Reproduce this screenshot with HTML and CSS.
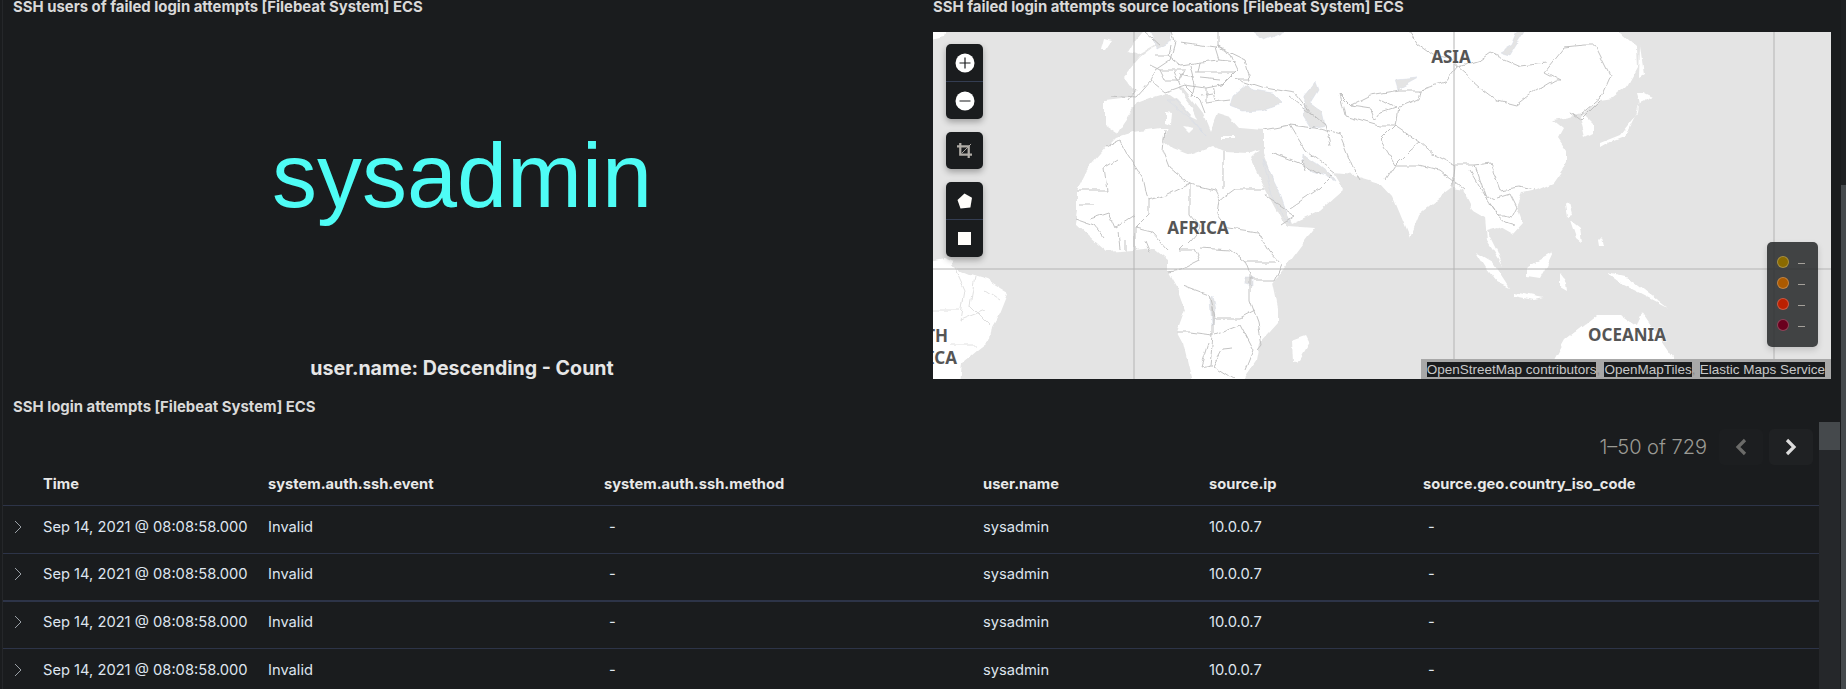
FILE: index.html
```html
<!DOCTYPE html>
<html lang="en">
<head>
<meta charset="utf-8">
<title>SSH dashboard</title>
<link rel="stylesheet" href="styles.css">
</head>
<body>
<div class="page">
  <div class="top">
    <section class="panel-left">
      <h2 class="title">SSH users of failed login attempts [Filebeat System] ECS</h2>
      <div class="tagcloud"><span class="tag">sysadmin</span></div>
      <div class="caption">user.name: Descending - Count</div>
    </section>
    <section class="panel-right">
      <h2 class="title">SSH failed login attempts source locations [Filebeat System] ECS</h2>
      <div class="map">
        <svg class="map-svg" viewBox="933 32 898 347" xmlns="http://www.w3.org/2000/svg">
          <defs>
            <filter id="rough" filterUnits="userSpaceOnUse" x="900" y="0" width="960" height="420" color-interpolation-filters="sRGB">
              <feTurbulence type="fractalNoise" baseFrequency="0.07" numOctaves="3" seed="4" result="n"/>
              <feDisplacementMap in="SourceGraphic" in2="n" scale="6" xChannelSelector="R" yChannelSelector="G"/>
              <feGaussianBlur stdDeviation="0.25"/>
            </filter>
          </defs>
          <rect class="sea" x="933" y="32" width="898" height="347"/>
          <g class="geo">
            <g class="land">
              <path d="M1165 26L1613 26 1637 47 1638 67 1627 87 1613 98 1600 100 1587 110 1580 117 1585 137 1593 133 1593 123 1583 113 1570 117 1553 120 1563 128 1558 137 1567 150 1567 163 1553 183 1537 190 1523 193 1517 207 1523 223 1512 235 1498 227 1487 230 1497 250 1503 265 1487 240 1485 217 1473 210 1463 190 1453 188 1420 213 1410 238 1393 197 1380 183 1353 175 1333 173 1343 190 1320 210 1292 223 1273 180 1263 153 1263 130 1240 128 1230 117 1217 113 1210 130 1203 113 1193 100 1183 88 1177 87 1193 108 1198 120 1192 117 1177 100 1167 93 1153 97 1137 103 1123 123 1117 133 1105 125 1105 100 1130 97 1133 90 1123 77 1140 57 1153 47 1165 42Z"/>
              <path d="M1123 135L1133 132 1160 128 1168 128 1163 140 1172 148 1190 155 1213 147 1223 152 1250 153 1258 150 1250 158 1267 193 1283 223 1288 226 1315 228 1308 237 1293 257 1282 272 1273 283 1278 307 1278 323 1260 343 1257 360 1248 373 1240 385 1193 385 1183 343 1177 332 1185 310 1177 288 1168 272 1168 260 1153 248 1133 250 1107 252 1090 237 1075 223 1077 210 1077 190 1087 170 1107 147 1117 137Z"/>
              <path d="M925 257L953 268 970 275 987 280 1008 293 1000 313 992 327 990 340 977 350 962 363 960 385 925 385Z"/>
              <path d="M1540 385L1565 340 1597 315 1620 315 1637 327 1642 312 1673 357 1673 385Z"/>
              <path d="M1147 26L1165 26 1155 45 1138 55 1128 52 1135 40Z"/>
              <path d="M1104 38L1112 40 1105 50 1101 50Z"/>
              <path d="M1306 335L1310 343 1300 360 1293 361 1292 340Z"/>
              <path d="M1476 252L1493 262 1510 288 1497 282 1486 268Z"/>
              <path d="M1513 292L1543 298 1534 300 1513 296Z"/>
              <path d="M1527 267L1553 252 1547 265 1540 278 1527 276Z"/>
              <path d="M1560 274L1566 282 1567 290 1560 286Z"/>
              <path d="M1607 273L1630 278 1667 307 1640 293 1620 283Z"/>
              <path d="M1637 112L1640 97 1638 112 1620 135 1600 143 1600 148 1612 141 1625 136Z"/>
              <path d="M1637 92L1643 92 1653 97 1640 103Z"/>
              <path d="M1640 45L1644 75 1639 78Z"/>
              <path d="M1565 205L1569 203 1572 215 1567 217Z M1570 220L1580 228 1582 243 1576 238Z"/>
              <path d="M1525 180L1528 178 1528 187 1525 187Z M1598 240L1602 236 1604 246 1599 246Z"/>
              <path d="M1166 112L1172 113 1171 124 1166 122Z M1183 126L1195 128 1190 133Z M1222 137L1235 137 1235 139 1222 139Z"/>
              <path d="M925 262L945 258 955 262 950 268 925 268Z"/>
              <path d="M925 26L948 26 945 36 925 40Z"/>
            </g>
            <g class="water">
              <path d="M1233 95L1247 83 1252 90 1273 93 1283 103 1262 110 1243 111 1230 106Z"/>
              <path d="M1305 95L1315 82 1318 90 1310 103 1322 112 1325 125 1312 128 1304 115Z"/>
              <path d="M1303 155L1315 163 1332 176 1335 181 1325 176 1312 172 1302 162Z"/>
              <path d="M1263 158L1280 193 1290 222 1283 218 1271 192Z"/>
              <path d="M1167 100L1175 100 1195 122 1205 135 1196 124 1180 110Z"/>
              <path d="M1245 26L1300 26 1265 40 1258 36Z"/>
              <path d="M1150 26L1170 26 1172 40 1157 48Z"/>
              <path d="M1520 26L1528 26 1510 55 1500 52 1512 45Z"/>
              <path d="M1395 80L1418 78 1400 88 1398 90Z"/>
              <path d="M1210 300L1213 296 1216 310 1212 325Z"/>
              <path d="M1246 278L1252 278 1252 286 1246 284Z"/>
            </g>
            <g class="border">
              <path d="M1117 160L1104 168 1107 190 1077 190M1107 147L1120 140 1128 155 1143 178 1148 200 1167 195 1190 184 1215 190 1220 200 1235 189 1265 189M1223 152L1223 189M1148 200L1148 215 1135 228 1135 250M1165 130L1163 150 1170 168 1190 184 1190 215 1200 228 1190 240 1180 250M1220 200L1218 215 1228 228 1258 232M1135 215L1115 228 1108 212 1090 218M1075 218L1095 225 1105 238M1118 232L1120 248M1135 228L1152 232 1168 250M1180 250L1195 250 1200 260 1180 270 1168 272M1200 248L1230 250 1245 262 1250 275 1250 300M1258 232L1270 252 1282 265 1275 280 1250 280M1245 262L1275 262M1183 285L1210 295 1213 307 1215 318 1240 318 1255 310M1213 307L1213 335 1190 332 1177 332M1213 335L1210 366 1200 368 1208 342M1215 335L1240 325 1253 350 1245 370M1250 300L1258 322 1262 345 1258 350M1233 347L1223 348 1213 366 1233 379M1280 225L1295 215 1265 195M1080 205L1095 205M1125 240L1125 250M1145 240L1150 252"/>
              <path d="M1110 95L1135 97 1150 80M1170 26L1175 42 1170 60 1155 70 1150 80 1165 92 1185 85 1205 88 1222 85 1237 70 1230 55 1218 47 1218 26M1180 42L1216 47 1220 60 1200 62 1180 65 1168 55 1170 45M1160 70L1185 70 1180 80 1165 80M1185 85L1200 100 1205 113M1205 88L1205 103 1230 100M1195 72L1220 72 1235 72M1218 47L1245 60 1250 78 1235 78 1265 88 1295 93 1310 112 1325 125 1330 145M1290 97L1313 115M1263 130L1290 125 1315 128 1340 135 1352 165 1360 180M1290 125L1305 150 1335 172M1272 152L1305 165 1320 175M1302 160L1305 170M1290 208L1320 188 1333 175M1175 72L1180 85M1190 65L1195 85M1150 65L1160 70M1200 78L1220 80M1145 32L1160 45M1128 100L1135 90M1155 55L1168 55M1165 80L1160 70M1180 75L1195 78M1195 85L1192 95M1200 95L1212 93M1212 85L1215 100M1220 60L1235 62M1200 62L1198 72"/>
              <path d="M1405 26L1418 45 1432 55 1450 58 1457 67 1445 82 1420 90 1418 100 1398 108 1395 125 1420 142 1435 155 1455 165 1475 165 1490 163 1500 190 1520 187 1535 190M1380 100L1395 108 1380 113 1375 120 1370 108 1350 105 1340 95 1345 115 1380 125 1395 125M1350 105L1370 95 1400 90 1420 90M1457 67L1480 87 1497 100 1517 105 1530 95 1555 80 1560 80 1545 72 1565 47 1583 45 1595 45 1610 75 1600 98 1580 115M1457 67L1480 60 1490 53 1520 66 1545 63M1395 125L1380 140 1395 165 1385 180M1420 142L1410 150 1395 165 1420 165 1440 170 1465 190M1455 165L1453 188M1475 165L1487 200 1497 215 1505 222 1515 225M1497 197L1510 193 1517 207 1512 217 1505 215 1497 215 1490 205M1470 170L1485 195 1495 200M1570 113L1580 120 1600 100"/>
              <path class="faint" d="M955 268L965 290 960 320 985 310M975 278L970 305 990 325M933 310L960 310M950 345L975 345M985 290L1000 300"/>
            </g>
          </g>
          <path d="M1134 32L1134 379M1454 32L1454 379M1774 32L1774 379M933 269L1831 269" class="grid"/>
          <g class="labels">
            <text x="1451" y="63" text-anchor="middle">ASIA</text>
            <text x="1198" y="234" text-anchor="middle">AFRICA</text>
            <text x="1627" y="341" text-anchor="middle">OCEANIA</text>
            <text x="948" y="342" text-anchor="end">SOUTH</text>
            <text x="957" y="364" text-anchor="end">AMERICA</text>
          </g>
        </svg>
        <div class="controls">
          <div class="ctl-group">
            <button class="ctl"><svg viewBox="0 0 20 20" width="20" height="20"><circle cx="10" cy="10" r="9.5" class="ic-fill"/><path d="M10 4.5V15.5M4.5 10H15.5" class="ic-stroke"/></svg></button>
            <button class="ctl"><svg viewBox="0 0 20 20" width="20" height="20"><circle cx="10" cy="10" r="9.5" class="ic-fill"/><path d="M4.5 10H15.5" class="ic-stroke"/></svg></button>
          </div>
          <div class="ctl-group">
            <button class="ctl"><svg viewBox="0 0 16 16" width="15" height="15"><path d="M3.5 0V12.5H16M0 3.5H12.5V16" class="ic-crop"/><path d="M5 11L15 1" class="ic-crop-thin"/></svg></button>
          </div>
          <div class="ctl-group">
            <button class="ctl"><svg viewBox="0 0 16 16" width="16" height="16"><path d="M7.5 0.5L15 4.8 13.4 14.6 3.5 15.4 0.5 7Z" class="ic-white"/></svg></button>
            <button class="ctl"><svg viewBox="0 0 14 14" width="14" height="14"><rect width="13" height="13" class="ic-white"/></svg></button>
          </div>
        </div>
        <div class="legend">
          <div class="legend-row"><span class="dot dot-a"></span><span class="dash"></span></div>
          <div class="legend-row"><span class="dot dot-b"></span><span class="dash"></span></div>
          <div class="legend-row"><span class="dot dot-c"></span><span class="dash"></span></div>
          <div class="legend-row"><span class="dot dot-d"></span><span class="dash"></span></div>
        </div>
        <div class="attribution"><span>OpenStreetMap contributors</span><i>,</i><span>OpenMapTiles</span><i>,</i><span>Elastic Maps Service</span></div>
      </div>
    </section>
  </div>
  <section class="panel-table">
    <h2 class="title">SSH login attempts [Filebeat System] ECS</h2>
    <div class="pager">
      <span class="pager-text">1–50 of 729</span>
      <button class="pg pg-off"><svg viewBox="0 0 14 20" width="14" height="20"><path d="M11 3L4 10 11 17" class="ch-dim"/></svg></button>
      <button class="pg"><svg viewBox="0 0 14 20" width="14" height="20"><path d="M3 3L10 10 3 17" class="ch-lit"/></svg></button>
    </div>
    <div class="table">
      <div class="row head"><div></div><div>Time</div><div>system.auth.ssh.event</div><div>system.auth.ssh.method</div><div>user.name</div><div>source.ip</div><div>source.geo.country_iso_code</div></div>
      <div class="row"><div class="exp"><svg viewBox="0 0 8 14" width="8" height="14"><path d="M1 1L7 7 1 13"/></svg></div><div>Sep 14, 2021 @ 08:08:58.000</div><div>Invalid</div><div class="nil">-</div><div>sysadmin</div><div>10.0.0.7</div><div class="nil">-</div></div>
      <div class="row strong"><div class="exp"><svg viewBox="0 0 8 14" width="8" height="14"><path d="M1 1L7 7 1 13"/></svg></div><div>Sep 14, 2021 @ 08:08:58.000</div><div>Invalid</div><div class="nil">-</div><div>sysadmin</div><div>10.0.0.7</div><div class="nil">-</div></div>
      <div class="row short"><div class="exp"><svg viewBox="0 0 8 14" width="8" height="14"><path d="M1 1L7 7 1 13"/></svg></div><div>Sep 14, 2021 @ 08:08:58.000</div><div>Invalid</div><div class="nil">-</div><div>sysadmin</div><div>10.0.0.7</div><div class="nil">-</div></div>
      <div class="row"><div class="exp"><svg viewBox="0 0 8 14" width="8" height="14"><path d="M1 1L7 7 1 13"/></svg></div><div>Sep 14, 2021 @ 08:08:58.000</div><div>Invalid</div><div class="nil">-</div><div>sysadmin</div><div>10.0.0.7</div><div class="nil">-</div></div>
    </div>
    <div class="inner-scroll"><div class="inner-thumb"></div></div>
  </section>
  <div class="outer-scroll"><div class="outer-thumb"></div></div>
</div>
</body>
</html>
```
FILE: styles.css
```css
* { box-sizing: border-box; }
html, body { margin: 0; padding: 0; height: 100%; overflow: hidden; background: #1a1c1e; }
body { font-family: Inter, "Liberation Sans", sans-serif; color: #dfe5ef; }
.page { position: relative; width: 1844px; height: 689px; margin-left: 2px; overflow: hidden; border-left: 1px solid #25272a; display: flex; flex-direction: column; }
.top { flex: none; display: grid; grid-template-columns: 920px 1fr; height: 391px; padding-left: 1px; padding-right: 15px; }
.title { margin: 0; padding-left: 9px; font-size: 14.9px; line-height: 15px; font-weight: 700; color: #d9d9d9; white-space: nowrap; }
.panel-left { display: flex; flex-direction: column; height: 380px; padding-right: 4px; }
.panel-right { display: flex; flex-direction: column; padding-left: 9px; }
.panel-right .title { padding-left: 0; height: 32px; }
.tagcloud { flex: 1; display: flex; align-items: center; justify-content: center; padding-bottom: 20px; }
.tag { font-family: "Liberation Sans", Arial, sans-serif; font-size: 90px; line-height: 1; color: #4efcf5; }
.caption { text-align: center; font-size: 19.6px; line-height: 24px; font-weight: 700; color: #e6e6e6; }
.map { position: relative; width: 898px; height: 347px; overflow: hidden; background: #e4e4e4; }
.map-svg { display: block; width: 898px; height: 347px; }
.sea { fill: #e4e4e4; }
.geo { filter: url(#rough); }
.land path { fill: #fff; stroke: none; }
.water path { fill: #e4e4e4; stroke: #d5dbe6; stroke-width: .5; }
.border path { fill: none; stroke: #bcbcbc; stroke-width: .9; stroke-linejoin: round; }
.border .faint { stroke: #dcdcdc; }
.grid { fill: none; stroke: #b4b4b4; stroke-width: 1; }
.labels text { font-family: "Noto Sans", "Open Sans", sans-serif; font-weight: 700; font-size: 17px; fill: #555; stroke: rgba(255,255,255,.55); stroke-width: 1.5px; paint-order: stroke; }
.controls { position: absolute; left: 13px; top: 12px; display: flex; flex-direction: column; gap: 13px; }
.ctl-group { width: 37px; border-radius: 5px; background: #1a1c1e; box-shadow: 0 3px 6px rgba(0,0,0,.3); overflow: hidden; }
.ctl { display: flex; align-items: center; justify-content: center; width: 37px; height: 37px; padding: 0; border: 0; background: none; }
.ctl + .ctl { border-top: 1px solid #343d52; height: 38px; }
.ic-fill { fill: #fff; }
.ic-stroke { fill: none; stroke: #1a1c1e; stroke-width: 1.2; }
.ic-crop { fill: none; stroke: #b0aca6; stroke-width: 2.4; }
.ic-crop-thin { fill: none; stroke: #b0aca6; stroke-width: 1; }
.ic-white { fill: #fffdfa; }
.legend { position: absolute; left: 834px; top: 210px; width: 51px; height: 105px; padding: 9px 0 0 10px; border-radius: 5px; background: rgba(42,44,46,.88); box-shadow: 0 3px 6px rgba(0,0,0,.15); display: flex; flex-direction: column; }
.legend-row { display: flex; align-items: center; height: 21px; gap: 9px; }
.dot { width: 12px; height: 12px; border-radius: 50%; border: 1px solid rgba(255,255,255,.25); }
.dot-a { background: #8a6a00; }
.dot-b { background: #ac5a00; }
.dot-c { background: #bb2000; }
.dot-d { background: #6a001e; }
.dash { width: 7px; height: 1px; margin-top: 3px; background: #a4a09a; }
.attribution { position: absolute; right: 0; bottom: 0; height: 20px; padding: 0 6px; background: #a8a8a8; display: flex; align-items: center; font-family: "Liberation Sans", Arial, sans-serif; font-size: 13.5px; color: #c8c8c8; }
.attribution span { background: #1a1c1e; line-height: 15px; white-space: nowrap; }
.attribution i { width: 8px; font-style: normal; color: #888; }
.panel-table { position: relative; flex: 1; min-height: 0; }
.panel-table .title { padding-top: 9px; padding-left: 10px; height: 23px; line-height: 14px; }
.pager { display: flex; align-items: center; justify-content: flex-end; height: 36px; margin-top: 15px; padding-right: 33px; }
.pager-text { font-size: 20px; font-weight: 300; color: #9a9a94; margin-right: 12px; }
.pg { display: flex; align-items: center; justify-content: center; width: 44px; height: 36px; padding: 0; border: 0; border-radius: 5px; background: #1f2123; }
.pg-off { background: #1c1e20; margin-right: 6px; }
.ch-dim { fill: none; stroke: #6b6b69; stroke-width: 3.2; }
.ch-lit { fill: none; stroke: #dcdcdc; stroke-width: 3.2; }
.table { width: 1816px; }
.row { display: grid; grid-template-columns: 40px 225px 336px 379px 226px 214px 396px; height: 48px; padding-bottom: 6px; align-items: center; font-size: 14.7px; color: #dfe5ef; border-bottom: 1px solid #2d3448; }
.row.head { height: 41px; padding-bottom: 2px; font-weight: 700; color: #e8e8e8; }
.row.strong { border-bottom: 2px solid #2d3448; }
.row.short { height: 47px; }
.exp { display: flex; align-items: center; padding-left: 11px; }
.exp svg { display: block; }
.exp path { fill: none; stroke: #9aa0a6; stroke-width: 1; }
.nil { padding-left: 5px; }
.inner-scroll { position: absolute; left: 1816px; top: 31px; width: 21px; bottom: 0; background: #25272a; }
.inner-thumb { height: 28px; background: #45494c; }
.outer-scroll { position: absolute; right: 0; top: 0; width: 5px; height: 100%; background: #1e2022; }
.outer-thumb { margin-top: 185px; height: 504px; background: #45494c; }
```
